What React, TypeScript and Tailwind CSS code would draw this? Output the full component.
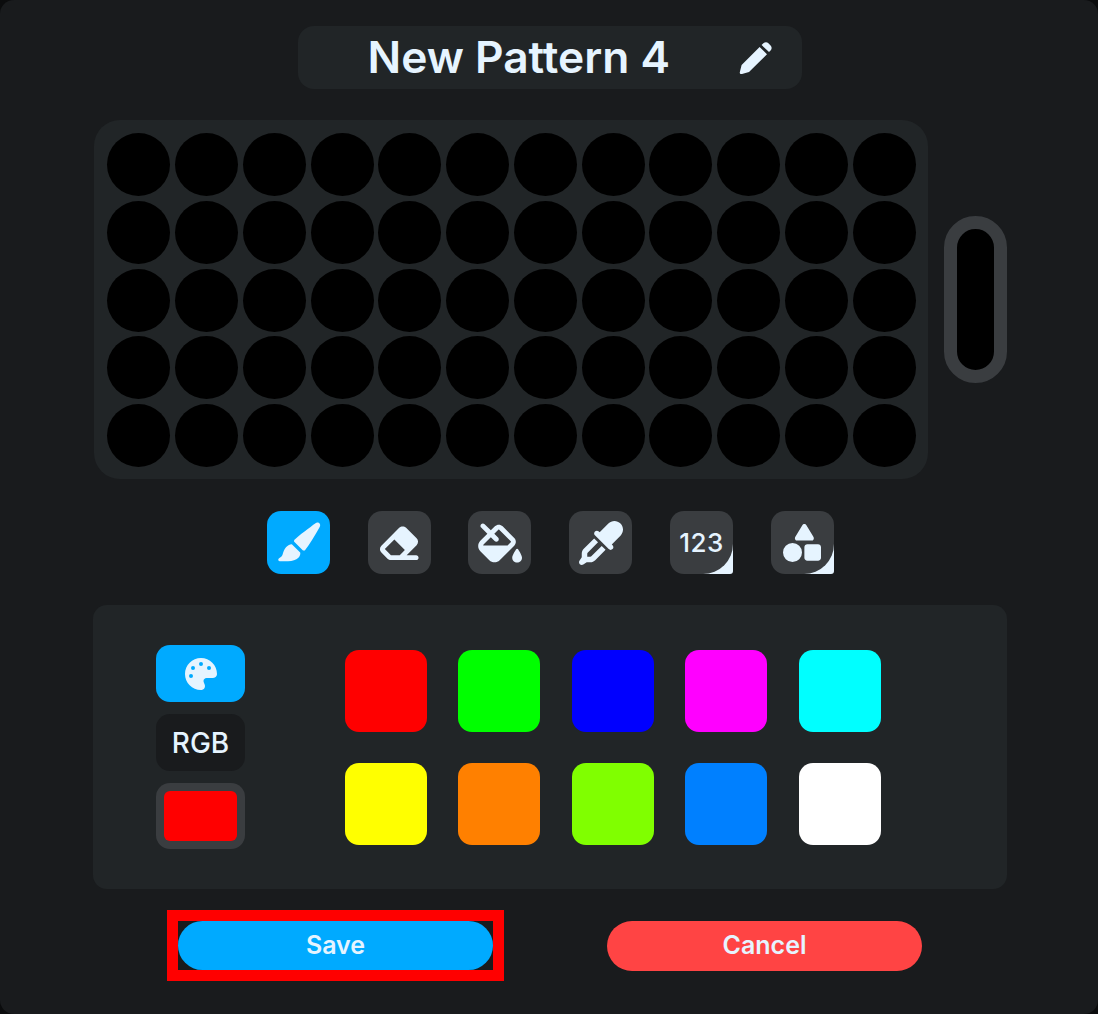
import { FaEraser, FaEyeDropper, FaFillDrip, FaPalette, FaShapes } from "react-icons/fa6";
import type { ReactNode } from "react";

const font = { fontFamily: "Inter, 'Liberation Sans', sans-serif" };
const dots = Array.from({ length: 60 }, (_, i) => i);
const swatches = [
  "bg-[#ff0000]", "bg-[#00ff00]", "bg-[#0000ff]", "bg-[#ff00ff]", "bg-[#00ffff]",
  "bg-[#ffff00]", "bg-[#ff8000]", "bg-[#80ff00]", "bg-[#0080ff]", "bg-[#ffffff]",
];

function Tool({ children, active, more }: { children: ReactNode; active?: boolean; more?: boolean }) {
  return (
    <div className="relative w-[63px] h-[63px]">
      {more && <div className="absolute right-0 bottom-0 w-8 h-8 bg-[#e6f4ff] rounded-br-[3px]" />}
      <div
        className={`relative w-full h-full flex items-center justify-center text-[#e6f4ff] rounded-[14px] ${
          active ? "bg-[#00aaff]" : "bg-[#3a3d40]"
        } ${more ? "rounded-br-[30px]" : ""}`}
      >
        {children}
      </div>
    </div>
  );
}

function Brush() {
  return (
    <svg viewBox="0 0 63 63" className="w-[63px] h-[63px]" fill="currentColor">
      <path d="M48.5 12.2 C50 11 52.5 11.6 53 13.2 C53.5 14.6 52.8 16 52 17.2 C48 24 43 33 37.8 39.4 L36 39.6 L27 30.6 L27.2 29 C33 23.5 42 17 48.5 12.2 Z" />
      <path d="M24.8 33.2 L33.2 41.6 C33.6 43 33 45.2 31.4 46.8 C29 49.2 25.5 50.2 21 50.2 L12.6 50.2 C11.2 50.2 10.8 48.6 11.8 47.6 C13.8 46.4 15 45.4 15.6 43.6 C16.4 40.8 17 38.4 19 36.2 C20.4 34.6 22.4 33.4 24.8 33.2 Z" />
    </svg>
  );
}

function Pencil() {
  return (
    <svg viewBox="0 0 34 34" className="ml-[70px] w-[34px] h-[34px]" fill="currentColor">
      <path d="M1.8 31.2 L3.6 24 L21.6 6 L29 13.2 L11 31 L4 33 C2.6 33.4 1.5 32.6 1.8 31.2 Z" />
      <path d="M23.6 4 L25.4 2.2 C27 0.8 29 0.8 30.4 2.2 L32.6 4.4 C34 6 34 8 32.6 9.4 L31 11 Z" />
    </svg>
  );
}

export default function App() {
  return (
    <div className="w-[1098px] h-[1014px] bg-[#0b0c0d]" style={font}>
      <div className="w-full h-full bg-[#191b1d] rounded-[14px] flex flex-col pt-[26px] text-[#e6f4ff]">
        <div className="self-center ml-[1px] w-[504px] h-[63px] rounded-[16px] bg-[#212527] flex items-center pl-[70px]">
          <span className="text-[44.3px] font-semibold leading-none w-[300px] whitespace-nowrap">New Pattern 4</span>
          <Pencil />
        </div>

        <div className="mt-[31px] ml-[94px] flex items-center gap-4">
          <div className="w-[834px] h-[359px] rounded-[26px] bg-[#212527] pl-[13.4px] pt-[13px] grid grid-cols-[repeat(12,63px)] auto-rows-[63px] gap-x-[4.75px] gap-y-[4.75px]">
            {dots.map((i) => (
              <div key={i} className="rounded-full bg-black" />
            ))}
          </div>
          <div className="w-[63px] h-[167px] rounded-full border-[13px] border-[#3a3d40] bg-black" />
        </div>

        <div className="mt-[32px] ml-[266.8px] flex gap-[37.8px]">
          <Tool active><Brush /></Tool>
          <Tool><FaEraser className="text-[44px]" /></Tool>
          <Tool><FaFillDrip className="text-[44px]" /></Tool>
          <Tool><FaEyeDropper className="text-[44px]" /></Tool>
          <Tool more><span className="text-[26px] font-medium tracking-[0.5px]">123</span></Tool>
          <Tool more><FaShapes className="text-[38px]" /></Tool>
        </div>

        <div className="mt-[31px] ml-[93px] w-[914px] h-[284px] rounded-[14px] bg-[#212527] flex pl-[63px] pt-[40px]">
          <div className="w-[89px] flex flex-col gap-3">
            <div className="h-[57px] rounded-[14px] bg-[#00aaff] flex items-center justify-center">
              <FaPalette className="text-[32px]" />
            </div>
            <div className="h-[57px] rounded-[14px] bg-[#191b1d] flex items-center justify-center text-[28px] font-medium">RGB</div>
            <div className="h-[66px] rounded-[14px] bg-[#3a3d40] p-2">
              <div className="w-full h-full rounded-[6px] bg-[#ff0000]" />
            </div>
          </div>
          <div className="ml-[100px] mt-[5px] grid grid-cols-[repeat(5,82px)] auto-rows-[82px] gap-x-[31.4px] gap-y-[31px]">
            {swatches.map((c) => (
              <div key={c} className={`rounded-[14px] ${c}`} />
            ))}
          </div>
        </div>

        <div className="mt-[21px] ml-[167px] flex items-center text-[25px] font-semibold">
          <div className="w-[337px] h-[71px] border-[11px] border-[#ff0000]">
            <div className="w-full h-full rounded-full bg-[#00aaff] flex items-center justify-center">Save</div>
          </div>
          <div className="ml-[103px] w-[315px] h-[50px] rounded-full bg-[#ff4444] flex items-center justify-center">Cancel</div>
        </div>
      </div>
    </div>
  );
}
